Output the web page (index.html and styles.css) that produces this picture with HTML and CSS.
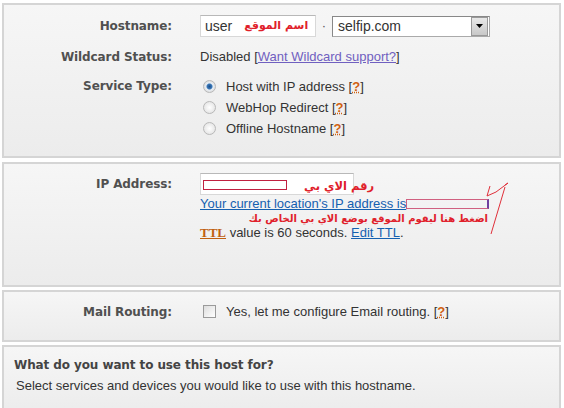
FILE: index.html
```html
<!DOCTYPE html>
<html dir="ltr" lang="en">
<head>
  <meta charset="UTF-8">
  <title>Modify Host</title>
  <link rel="stylesheet" href="styles.css">
</head>
<body>
  <div class="page">
    <section class="panel panel-host">
      <div class="row row-host">
        <div class="label">Hostname:</div>
        <div class="value host">
          <span class="textbox host-box">user <span class="note note-in" dir="rtl">اسم الموقع</span></span>
          <span class="dot">·</span>
          <span class="select">selfip.com<span class="select-btn"><svg width="7" height="4" viewBox="0 0 7 4"><path d="M0 0h7L3.5 4z" fill="#000"/></svg></span></span>
        </div>
      </div>
      <div class="row row-wild">
        <div class="label">Wildcard Status:</div>
        <div class="value">Disabled [<a class="visited" href="#">Want Wildcard support?</a>]</div>
      </div>
      <div class="row row-type">
        <div class="label">Service Type:</div>
        <div class="value options">
          <div class="option"><span class="radio on"></span>Host with IP address [<a class="help" href="#">?</a>]</div>
          <div class="option"><span class="radio"></span>WebHop Redirect [<a class="help" href="#">?</a>]</div>
          <div class="option"><span class="radio"></span>Offline Hostname [<a class="help" href="#">?</a>]</div>
        </div>
      </div>
    </section>

    <section class="panel panel-ip">
      <div class="row row-ip">
        <div class="label">IP Address:</div>
        <div class="value ip">
          <div class="ip-line">
            <span class="textbox ip-box"><span class="hidden-ip">▪▪▪▪▪▪▪▪▪▪▪▪▪▪▪</span><span class="scribble"></span></span>
            <span class="note note-ip" dir="rtl">رقم الاي بي</span>
          </div>
          <div class="loc-line"><a class="link" href="#">Your current location's IP address is<span class="masked"></span></a></div>
          <div class="note note-help" dir="rtl">اضغط هنا ليقوم الموقع بوضع الاي بي الخاص بك</div>
          <div class="ttl-line"><a class="ttl" href="#">TTL</a> value is 60 seconds. <a class="link" href="#">Edit TTL</a>.</div>
          <svg class="arrow" width="30" height="56" viewBox="0 0 30 56"><path d="M3 14 L6 4 M3 14 L12 10 L24 1 M24 1 L21 3 M21 5 L7 52" fill="none" stroke="#e0303a" stroke-width="1"/></svg>
        </div>
      </div>
    </section>

    <section class="panel panel-mail">
      <div class="row row-mail">
        <div class="label">Mail Routing:</div>
        <div class="value"><span class="check"></span>Yes, let me configure Email routing. [<a class="help" href="#">?</a>]</div>
      </div>
    </section>

    <section class="panel panel-use">
      <h3>What do you want to use this host for?</h3>
      <p>Select services and devices you would like to use with this hostname.</p>
    </section>
  </div>
</body>
</html>
```

FILE: styles.css
```css
body {margin: 0; font: 13px/18px "Liberation Sans", Arial, sans-serif; color: #333; background: #fff;}
.page {padding: 3px 3px 0 2px;}
.panel {box-sizing: border-box; border: 2px solid #d5d5d5; background: linear-gradient(#f6f6f6, #ececec); margin-bottom: 3px;}
.panel-host {height: 155px; padding-top: 10px;}
.panel-ip {height: 125px; margin-top: 4px; padding-top: 9px;}
.panel-mail {height: 52px; padding-top: 11px;}
.panel-use {height: 70px; padding: 9px 10px 0;}

.row {display: grid; grid-template-columns: 168px 1fr; column-gap: 28px;}
.label {text-align: right; font: bold 12px/18px "DejaVu Sans", Verdana, sans-serif; color: #505050; letter-spacing: -0.1px;}
.value {color: #333;}

.row-host .label {line-height: 22px;}
.row-wild {margin-top: 11px;}
.row-type {margin-top: 11px;}

.host {display: flex; align-items: center;}
.textbox {box-sizing: border-box; display: inline-flex; align-items: center; height: 22px; border: 1px solid #d8d8d8; border-top-color: #b8b8b8; background: #fff; padding: 0 4px;}
.host-box {width: 116px; font-size: 14px;}
.note {font: bold 11px/14px "DejaVu Sans", sans-serif; color: #e0202a; white-space: nowrap;}
.note-in {margin-left: 12px;}
.dot {width: 16px; text-align: center; color: #555;}
.select {box-sizing: border-box; display: inline-flex; align-items: center; justify-content: space-between; width: 158px; height: 21px; border: 1px solid #7f9db9; border-color: #888 #aaa #aaa #888; background: #fff; padding: 0 1px 0 5px; font-size: 14px;}
.select-btn {display: flex; align-items: center; justify-content: center; width: 15px; height: 17px; background: linear-gradient(#e8e8e8, #c8c8c8); border: 1px solid #999;}

a.visited {color: #7060c0;}
a.help {color: #d06010; font-weight: bold; text-decoration: underline dotted;}
.link {color: #1560b0;}

.options {margin-top: -1px;}
.option {display: flex; align-items: center; height: 21px;}
.radio {box-sizing: border-box; width: 13px; height: 13px; border-radius: 50%; border: 1px solid #b8b8b8; background: radial-gradient(#fff, #ddd); margin: 0 10px 0 3px;}
.radio.on {background: radial-gradient(circle, #1c4e8a 0, #3a78b8 2.5px, #e8eef4 3.5px, #dcdcdc 6px);}

.row-ip .label {line-height: 22px;}
.ip {position: relative;}
.ip-line {display: flex; align-items: center; height: 22px;}
.ip-box {position: relative; width: 154px; overflow: hidden; padding: 0;}
.hidden-ip {color: #000; font-size: 9px; letter-spacing: -1px; margin: 8px 0 0 2px;}
.scribble {position: absolute; left: 2px; top: 6px; width: 82px; height: 8px; border: 1px solid #c02040; background: #fff;}
.note-ip {position: relative; margin: 4px 0 0 -50px; font-size: 11.5px;}
.loc-line {margin-top: 1px; line-height: 16px;}
.masked {display: inline-block; width: 80px; height: 8px; border: 1px solid #d06080; border-right: 2px solid #7040a0; vertical-align: -1px;}
.note-help {width: 288px; text-align: right; line-height: 13px; font-size: 10px;}
.ttl-line {line-height: 14px;}
a.ttl {color: #c06010; font: bold 13px "Liberation Serif", serif;}
.arrow {position: absolute; left: 284px; top: 9px;}

.check {display: inline-block; box-sizing: border-box; width: 13px; height: 13px; border: 1px solid #9a9a9a; background: linear-gradient(135deg, #ddd, #fff); vertical-align: -2px; margin: 0 10px 0 3px;}

.panel-use h3 {margin: 0; font: bold 12px/18px "DejaVu Sans", Verdana, sans-serif; color: #444; letter-spacing: -0.1px;}
.panel-use p {margin: 3px 0 0 2px; color: #333;}
```
